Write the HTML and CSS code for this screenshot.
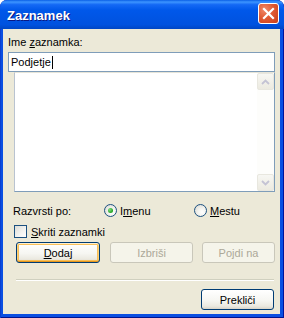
FILE: index.html
```html
<!DOCTYPE html>
<html lang="sl">
<head>
    <meta charset="utf-8">
    <title>Zaznamek</title>
    <link rel="stylesheet" href="styles.css">
</head>
<body>
    <div class="window">
        <div class="titlebar">
            <span class="title">Zaznamek</span>
            <div class="close">
                <svg width="13" height="13" viewBox="0 0 13 13">
                    <path d="M2 2 L11 11 M11 2 L2 11" stroke="#fff" stroke-width="2.2" stroke-linecap="square"/>
                </svg>
            </div>
        </div>
        <div class="client">
            <div class="label">Ime <u>z</u>aznamka:</div>
            <div class="input">Podjetje<span class="caret"></span></div>
            <div class="list">
                <div class="list-body"></div>
                <div class="scrollbar">
                    <div class="sb-btn">
                        <svg width="9" height="6" viewBox="0 0 9 6"><path d="M1 5 L4.5 1.5 L8 5" fill="none" stroke="#c4c3d4" stroke-width="1.8"/></svg>
                    </div>
                    <div class="sb-track"></div>
                    <div class="sb-btn">
                        <svg width="9" height="6" viewBox="0 0 9 6"><path d="M1 1 L4.5 4.5 L8 1" fill="none" stroke="#c4c3d4" stroke-width="1.8"/></svg>
                    </div>
                </div>
            </div>
            <div class="sort-row">
                <span class="sort-label">Razvrsti po:</span>
                <span class="option first"><span class="radio checked"></span><span>I<u>m</u>enu</span></span>
                <span class="option"><span class="radio"></span><span><u>M</u>estu</span></span>
            </div>
            <div class="check-row">
                <span class="checkbox"></span><span><u>S</u>kriti zaznamki</span>
            </div>
            <div class="buttons">
                <div class="btn default"><span><u>D</u>odaj</span></div>
                <div class="btn disabled wide">Izbriši</div>
                <div class="btn disabled narrow">Pojdi na</div>
            </div>
            <div class="separator"></div>
            <div class="footer">
                <div class="btn narrow">Prekliči</div>
            </div>
        </div>
    </div>
</body>
</html>
```

FILE: styles.css
```css
* {
    margin: 0;
    padding: 0;
    box-sizing: border-box;
}
body {
    background: #fff;
    font-family: "Liberation Sans", Arial, sans-serif;
    font-size: 11px;
    color: #000;
}
.window {
    width: 284px;
    height: 318px;
    border-radius: 7px 7px 0 0;
    background: #0a4fe2;
    box-shadow: inset 1px 0 #0a3fd0, inset -1px 0 #00139c, inset 0 -1px #00138c;
    padding: 0 4px 4px 3px;
    display: flex;
    flex-direction: column;
    overflow: hidden;
}
.titlebar {
    height: 29px;
    margin: 0 -4px 0 -3px;
    padding: 0 5px 0 7px;
    display: flex;
    align-items: center;
    justify-content: space-between;
    border-radius: 7px 7px 0 0;
    background: linear-gradient(to bottom, #0a5fe6 0%, #3d95ff 7%, #1469f5 16%, #0058ea 35%, #0054e3 65%, #0052df 85%, #0046c4 100%);
}
.title {
    color: #fff;
    font-size: 13px;
    font-weight: bold;
    text-shadow: 1px 1px #0a1883;
    padding-top: 1px;
}
.close {
    width: 21px;
    height: 21px;
    border: 1px solid #fff;
    border-radius: 3px;
    background: radial-gradient(circle at 30% 30%, #f08a6a 0%, #e05a34 45%, #c93d17 100%);
    display: flex;
    align-items: center;
    justify-content: center;
    margin-top: -2px;
}
.client {
    flex: 1;
    background: #ece9d8;
    display: flex;
    flex-direction: column;
}
u {
    text-decoration: underline;
    text-underline-offset: 1px;
}
.label {
    margin: 7px 0 0 5px;
    height: 13px;
    line-height: 13px;
}
.input {
    margin: 3px 5px 0 5px;
    height: 20px;
    border: 1px solid #7f9db9;
    background: #fff;
    padding-left: 2px;
    line-height: 18px;
    display: flex;
    align-items: center;
}
.caret {
    width: 1px;
    height: 13px;
    background: #000;
    margin-left: 1px;
}
.list {
    margin: 0 5px 0 11px;
    height: 120px;
    border: 1px solid #7f9db9;
    border-top-color: #e6e4d8;
    border-left-color: #b9c3d0;
    background: #fff;
    display: flex;
}
.list-body {
    flex: 1;
}
.scrollbar {
    width: 17px;
    display: flex;
    flex-direction: column;
    background: #fdfdfb;
}
.sb-btn {
    height: 17px;
    border: 1px solid #e8e7df;
    border-radius: 2px;
    background: linear-gradient(to bottom, #f7f7f3, #eceae0);
    display: flex;
    align-items: center;
    justify-content: center;
}
.sb-track {
    flex: 1;
    background-image: radial-gradient(circle, #eeeee8 0.6px, transparent 0.7px);
    background-size: 4px 4px;
}
.sort-row {
    margin: 12px 0 0 10px;
    height: 13px;
    display: flex;
    align-items: center;
}
.sort-label {
    width: 91px;
}
.option {
    display: flex;
    align-items: center;
    gap: 3px;
}
.option.first {
    width: 90px;
}
.radio {
    width: 13px;
    height: 13px;
    border: 1px solid #1c5180;
    border-radius: 50%;
    background: radial-gradient(circle at 65% 65%, #fff 0%, #f3f3ef 40%, #d4d3cc 100%);
    display: flex;
    align-items: center;
    justify-content: center;
}
.radio.checked::after {
    content: "";
    width: 5px;
    height: 5px;
    border-radius: 50%;
    background: radial-gradient(circle at 35% 35%, #7fe07f, #21a121 70%);
}
.check-row {
    margin: 8px 0 0 11px;
    height: 13px;
    display: flex;
    align-items: center;
    gap: 4px;
}
.checkbox {
    width: 13px;
    height: 13px;
    border: 1px solid #1c5180;
    background: linear-gradient(135deg, #dcdcd7 0%, #f4f4f1 60%, #fff 100%);
}
.buttons {
    margin: 4px 0 0 13px;
    display: flex;
}
.btn {
    width: 84px;
    height: 21px;
    border: 1px solid #003c74;
    border-radius: 3px;
    background: linear-gradient(to bottom, #fff 0%, #f6f6f2 55%, #ebe9e0 85%, #d8d4c8 100%);
    display: flex;
    align-items: center;
    justify-content: center;
}
.btn.default {
    box-shadow: inset 0 1px #fff0cf, inset 0 -1px #e5971f, inset 1px 0 #fbd17a, inset -1px 0 #fbd17a, inset 0 0 0 2px #f8c05a;
}
.btn.disabled {
    border-color: #c9c7ba;
    background: #f5f4ea;
    color: #aca899;
}
.btn.wide {
    width: 83px;
    margin-left: 10px;
}
.btn.narrow {
    width: 73px;
}
.buttons .btn.narrow {
    margin-left: 9px;
}
.separator {
    margin: 16px 6px 0 13px;
    height: 2px;
    border-top: 1px solid #d0d0bf;
    border-bottom: 1px solid #fff;
}
.footer {
    margin-top: 8px;
    padding-right: 6px;
    display: flex;
    justify-content: flex-end;
}
```
